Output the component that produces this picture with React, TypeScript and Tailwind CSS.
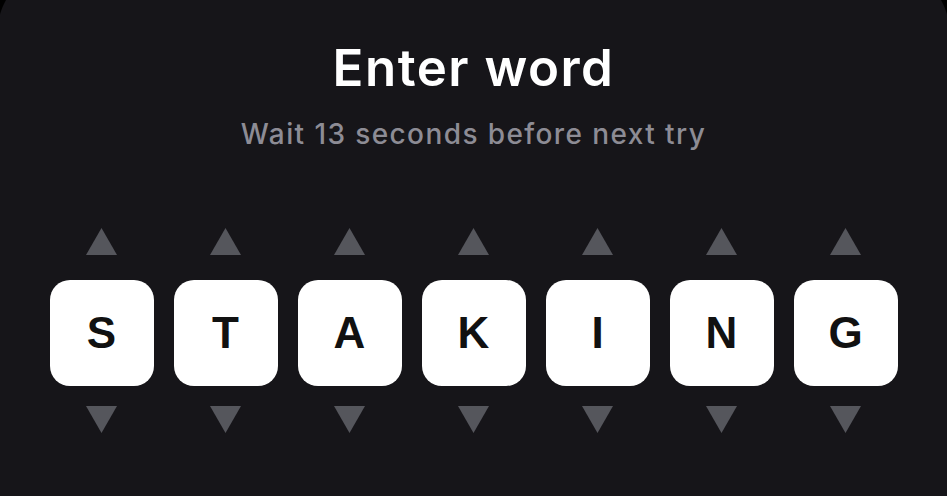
const LETTERS = ['S', 'T', 'A', 'K', 'I', 'N', 'G'];

function Arrow({ down }: { down?: boolean }) {
  return (
    <svg width="31" height="27" viewBox="0 0 31 27" className={down ? 'rotate-180' : ''}>
      <polygon points="15.5,0 31,27 0,27" fill="#55565c" />
    </svg>
  );
}

export default function App() {
  return (
    <div className="h-[496px] w-full overflow-hidden bg-black font-['Inter',sans-serif]">
      <div className="-mx-[2px] -mt-[30px] h-[560px] rounded-t-[60px] bg-[#161519] pt-[72px] flex flex-col items-center">
        <h1 className="text-[51px] leading-none font-semibold text-white tracking-[1.5px]">Enter word</h1>
        <p className="mt-[27px] text-[28px] leading-none font-medium text-[#8d8c95] tracking-[1.4px]">Wait 13 seconds before next try</p>

        <div className="mt-[80px] flex gap-[20px]">
          {LETTERS.map((l, i) => (
            <div key={i} className="flex flex-col items-center">
              <Arrow />
              <div className="mt-[25px] w-[104px] h-[106px] rounded-[20px] bg-white flex items-center justify-center">
                <span className="font-['Liberation_Sans',Arial,sans-serif] text-[44px] leading-none font-bold text-[#111]">{l}</span>
              </div>
              <div className="mt-[20px]">
                <Arrow down />
              </div>
            </div>
          ))}
        </div>
      </div>
    </div>
  );
}
